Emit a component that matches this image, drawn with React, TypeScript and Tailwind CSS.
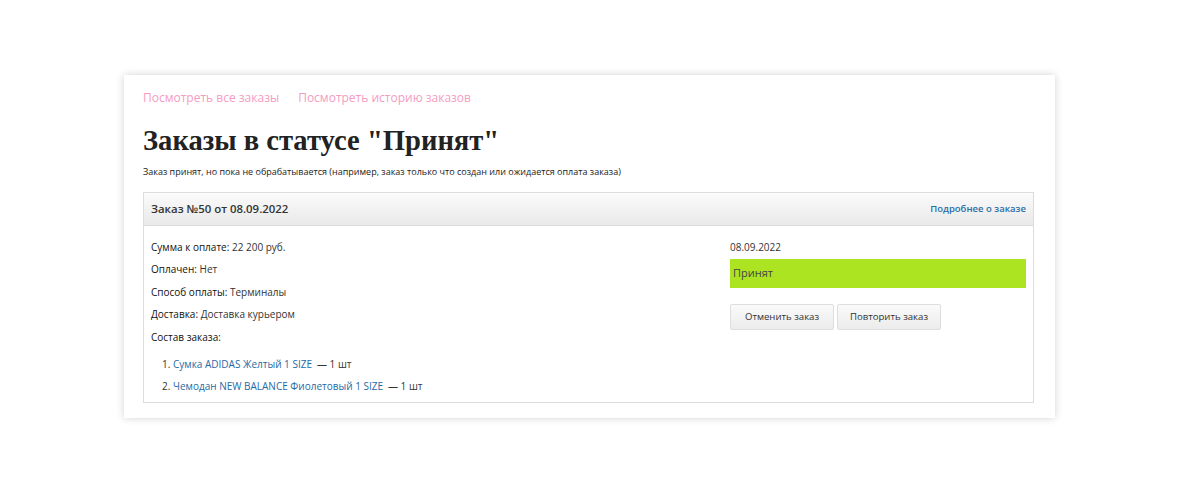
import React from 'react';

const rows: [string, string][] = [
  ['Сумма к оплате:', '22 200 руб.'],
  ['Оплачен:', 'Нет'],
  ['Способ оплаты:', 'Терминалы'],
  ['Доставка:', 'Доставка курьером'],
];

const items = [
  'Сумка ADIDAS Желтый 1 SIZE',
  'Чемодан NEW BALANCE Фиолетовый 1 SIZE',
];

const App: React.FC = () => {
  return (
    <div className="min-h-[500px] bg-white pt-[75px] font-['Open_Sans',sans-serif] text-[#222]">
      <div className="ml-[124px] w-[931px] bg-white pl-[19px] pr-[21px] pt-[14px] pb-[15px] shadow-[0_0_8px_rgba(0,0,0,0.18)]">
        {/* Top links */}
        <div className="flex gap-[19px] text-[12px] leading-[18px] text-[#f59cc3]">
          <a href="#">Посмотреть все заказы</a>
          <a href="#">Посмотреть историю заказов</a>
        </div>

        <h1 className="mt-[16px] font-['Liberation_Serif',serif] text-[28.6px] font-bold leading-[36px] text-[#222]">
          Заказы в статусе "Принят"
        </h1>
        <p className="mt-[6px] text-[9px] leading-[14px] text-[#222]">
          Заказ принят, но пока не обрабатывается (например, заказ только что создан или ожидается оплата заказа)
        </p>

        {/* Order card */}
        <div className="mt-[13px] border border-[#dcdcdc]">
          <div className="flex h-[33px] items-center justify-between border-b border-[#dcdcdc] bg-gradient-to-b from-[#fbfbfb] to-[#e9e9e9] pl-[7px] pr-[7px]">
            <span className="text-[11.4px] font-semibold text-[#333]">Заказ №50 от 08.09.2022</span>
            <a href="#" className="text-[9.5px] font-semibold text-[#2a6faa]">Подробнее о заказе</a>
          </div>
          <div className="flex pl-[7px] pr-[7px] pt-[12px] pb-[3px]">
            <div className="flex-1 text-[10px] text-[#222]">
              {rows.map(([k, v]) => (
                <div key={k} className="h-[22.4px] leading-[18px]">
                  <span className="font-medium text-[#111]">{k}</span> <span className="text-[#333]">{v}</span>
                </div>
              ))}
              <div className="h-[22px] leading-[18px] font-medium text-[#111]">Состав заказа:</div>
              <ol className="mt-[5px] list-decimal pl-[22px] text-[#333]">
                {items.map((it) => (
                  <li key={it} className="h-[22.4px] leading-[18px]">
                    <a href="#" className="text-[#1f6aa5]">{it}</a>
                    <span className="ml-[5px]">— 1 шт</span>
                  </li>
                ))}
              </ol>
            </div>
            <div className="w-[296px] text-[10px]">
              <div className="leading-[18px] text-[#333]">08.09.2022</div>
              <div className="mt-[3px] flex h-[29px] items-center bg-[#ade421] px-[3px] text-[11px] text-[#444]">
                Принят
              </div>
              <div className="mt-[16px] flex gap-[3px]">
                <button className="h-[26px] w-[104px] rounded-[2px] border border-[#dedede] bg-gradient-to-b from-[#fafafa] to-[#ececec] text-[9.6px] text-[#333]">
                  Отменить заказ
                </button>
                <button className="h-[26px] w-[104px] rounded-[2px] border border-[#dedede] bg-gradient-to-b from-[#fafafa] to-[#ececec] text-[9.6px] text-[#333]">
                  Повторить заказ
                </button>
              </div>
            </div>
          </div>
        </div>
      </div>
    </div>
  );
};

export default App;
